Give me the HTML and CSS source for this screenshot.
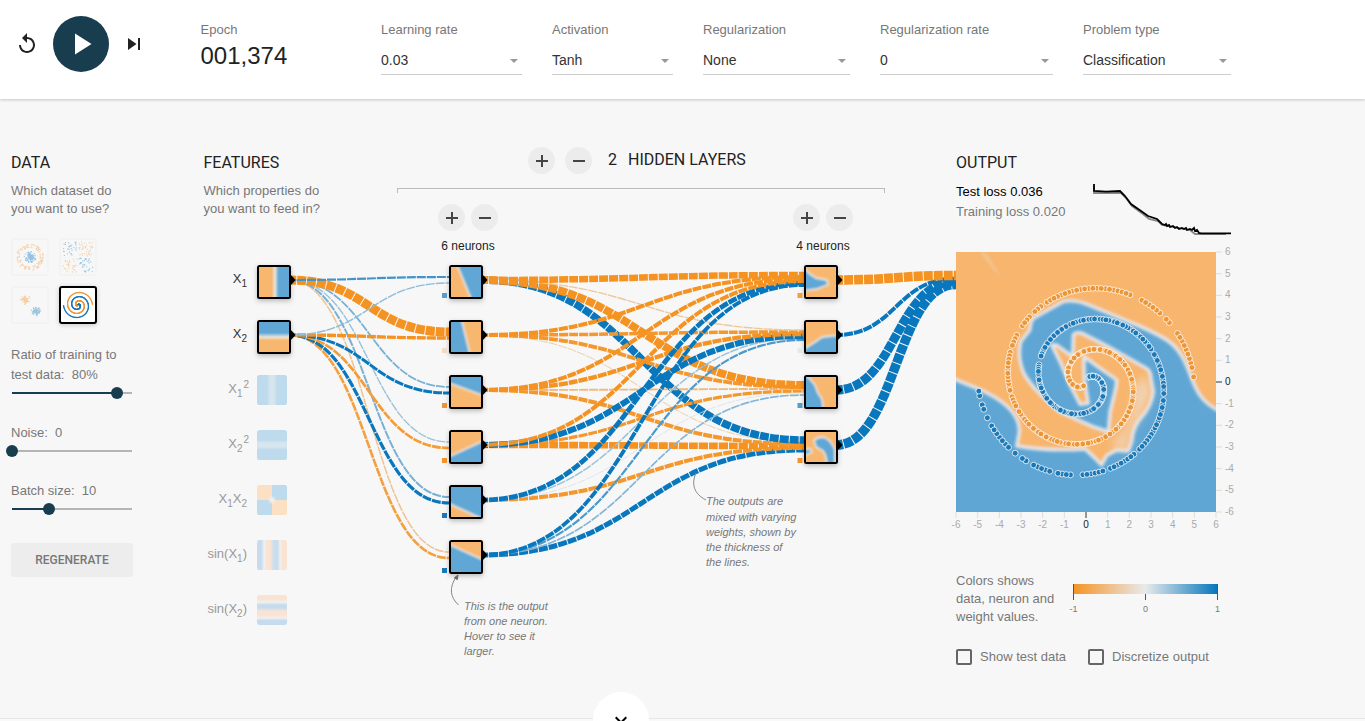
FILE: index.html
```html
<!DOCTYPE html>
<html lang="en">
<head>
<meta charset="utf-8">
<title>Neural Network Playground</title>
<link rel="stylesheet" href="styles.css">
</head>
<body>
<header class="top">
  <div class="transport">
    <svg class="reset" width="24" height="24" viewBox="0 0 24 24"><path d="M12 5V1L7 6l5 5V7c3.31 0 6 2.69 6 6s-2.69 6-6 6-6-2.69-6-6H4c0 4.42 3.58 8 8 8s8-3.58 8-8-3.58-8-8-8z"/></svg>
    <button class="play" aria-label="Run"><svg width="36" height="36" viewBox="0 0 24 24"><path d="M8 5v14l11-7z"/></svg></button>
    <svg class="step" width="24" height="24" viewBox="0 0 24 24"><path d="M6 18l8.5-6L6 6v12zM16 6v12h2V6h-2z"/></svg>
  </div>
  <div class="epoch"><span class="label">Epoch</span><span class="count">001,374</span></div>
  <div class="control lr"><span class="label">Learning rate</span><div class="select">0.03</div></div>
  <div class="control act"><span class="label">Activation</span><div class="select">Tanh</div></div>
  <div class="control reg"><span class="label">Regularization</span><div class="select">None</div></div>
  <div class="control rate"><span class="label">Regularization rate</span><div class="select">0</div></div>
  <div class="control prob"><span class="label">Problem type</span><div class="select">Classification</div></div>
</header>

<main class="main">
  <section class="data">
    <h4>Data</h4>
    <p class="hint">Which dataset do<br>you want to use?</p>
    <div class="thumbs">
      <svg class="thumb" id="circle" viewBox="0 0 32 32"></svg>
      <svg class="thumb" id="xor" viewBox="0 0 32 32"></svg>
      <svg class="thumb" id="gauss" viewBox="0 0 32 32"></svg>
      <svg class="thumb selected" id="spiral" viewBox="0 0 32 32"></svg>
    </div>
    <div class="slider ratio"><p>Ratio of training to<br>test data: &nbsp;80%</p><div class="track"><i class="fill"></i><i class="knob"></i></div></div>
    <div class="slider noise"><p>Noise: &nbsp;0</p><div class="track"><i class="fill"></i><i class="knob"></i></div></div>
    <div class="slider batch"><p>Batch size: &nbsp;10</p><div class="track"><i class="fill"></i><i class="knob"></i></div></div>
    <button class="regen">Regenerate</button>
  </section>

  <section class="network">
    <div class="heads">
      <div class="features">
        <h4>Features</h4>
        <p class="hint">Which properties do<br>you want to feed in?</p>
      </div>
      <div class="hidden">
        <div class="layers"><button class="round plus"></button><button class="round"></button><span class="num">2</span><span>Hidden layers</span></div>
        <div class="bracket"></div>
        <div class="sizes">
          <div class="size"><div class="pair"><button class="round plus"></button><button class="round"></button></div>6 neurons</div>
          <div class="size"><div class="pair"><button class="round plus"></button><button class="round"></button></div>4 neurons</div>
        </div>
      </div>
    </div>
    <svg id="net" class="net" width="752" height="468" viewBox="204 253 752 468">
      <defs>
        <filter id="soft" x="-30%" y="-30%" width="160%" height="160%"><feGaussianBlur stdDeviation="0.8"/></filter>
        <filter id="shade" x="-30%" y="-30%" width="160%" height="170%"><feDropShadow dx="0" dy="2" stdDeviation="2.5" flood-opacity=".25"/></filter>
        <clipPath id="tile"><rect width="30" height="30"/></clipPath>
        <linearGradient id="gx1"><stop offset=".42" stop-color="#f8b76f"/><stop offset=".53" stop-color="#e8e2d8"/><stop offset=".66" stop-color="#60a7d6"/></linearGradient>
        <linearGradient id="gx2" x2="0" y2="1"><stop offset=".36" stop-color="#60a7d6"/><stop offset=".5" stop-color="#e8e2d8"/><stop offset=".62" stop-color="#f8b76f"/></linearGradient>
        <linearGradient id="gsq1"><stop offset=".33" stop-color="#bedaed"/><stop offset=".44" stop-color="#d6e6ee"/><stop offset=".56" stop-color="#d6e6ee"/><stop offset=".67" stop-color="#bedaed"/></linearGradient>
        <linearGradient id="gsq2" x2="0" y2="1"><stop offset=".33" stop-color="#bedaed"/><stop offset=".44" stop-color="#d6e6ee"/><stop offset=".56" stop-color="#d6e6ee"/><stop offset=".67" stop-color="#bedaed"/></linearGradient>
        <linearGradient id="gs1"><stop offset=".14" stop-color="#c6dcee"/><stop offset=".24" stop-color="#f0f0f0"/><stop offset=".33" stop-color="#f9e4d3"/><stop offset=".45" stop-color="#f9e4d3"/><stop offset=".55" stop-color="#cbdfed"/><stop offset=".68" stop-color="#c6dcee"/><stop offset=".77" stop-color="#f0f0f0"/><stop offset=".85" stop-color="#f9e4d3"/></linearGradient>
        <linearGradient id="gs2" x2="0" y2="1"><stop offset=".14" stop-color="#f9e4d3"/><stop offset=".24" stop-color="#f0f0f0"/><stop offset=".33" stop-color="#c6dcee"/><stop offset=".43" stop-color="#c6dcee"/><stop offset=".54" stop-color="#f9e4d3"/><stop offset=".68" stop-color="#f9e4d3"/><stop offset=".77" stop-color="#f0f0f0"/><stop offset=".85" stop-color="#c6dcee"/></linearGradient>
      </defs>
      <g id="links" fill="none"></g>
      <g id="nodes"></g>
      <g class="feature-names">
        <text class="on" x="247" y="283">X<tspan class="sub" dy="4">1</tspan></text>
        <text class="on" x="247" y="338">X<tspan class="sub" dy="4">2</tspan></text>
        <text x="249" y="393">X<tspan class="sub" dy="4">1</tspan><tspan class="sub" dx="1" dy="-9">2</tspan></text>
        <text x="249" y="448">X<tspan class="sub" dy="4">2</tspan><tspan class="sub" dx="1" dy="-9">2</tspan></text>
        <text x="247" y="503">X<tspan class="sub" dy="4">1</tspan><tspan dy="-4">X</tspan><tspan class="sub" dy="4">2</tspan></text>
        <text x="247" y="558">sin(X<tspan class="sub" dy="4">1</tspan><tspan dy="-4">)</tspan></text>
        <text x="247" y="613">sin(X<tspan class="sub" dy="4">2</tspan><tspan dy="-4">)</tspan></text>
      </g>
      <g class="arrows">
        <path d="M458.5 605C450 597 449 588 456 577"/><path class="tip" d="M458 575l-.6 4.6-3-1.8z"/>
        <path d="M706 500C694 494 691 484 696 473"/>
      </g>
      <g class="note">
        <text x="464" y="610">This is the output</text><text x="464" y="625">from one neuron.</text><text x="464" y="640">Hover to see it</text><text x="464" y="655">larger.</text>
        <text x="706" y="505">The outputs are</text><text x="706" y="521">mixed with varying</text><text x="706" y="536">weights, shown by</text><text x="706" y="551">the thickness of</text><text x="706" y="566">the lines.</text>
      </g>
    </svg>
  </section>

  <section class="output">
    <h4>Output</h4>
    <div class="stats">
      <div class="losses"><div>Test loss 0.036</div><div class="train">Training loss 0.020</div></div>
      <svg class="chart" width="140" height="56" viewBox="0 0 140 56" fill="none">
        <path stroke="#888" d="M3 3v7h27l5 5 6 8 11 8 6 5 9 2 4 4 28 5 5 4h31"/>
        <path stroke="#000" d="M3 1v7l12 .6L29 8l5 5 6 8 10 7 7 5 9 3 5 5 3 1 1-1 1 2 2-1 1 2 3-1 2 2 2-1 2 2 3-1 2 1 2-1 1 2 3-1 2 1 2-2 1 3 2-1 2 3 2 .4h31"/>
      </svg>
    </div>
    <svg id="map" class="map" width="285" height="288" viewBox="0 0 285 288">
      <defs>
        <filter id="haze" filterUnits="userSpaceOnUse" x="-60" y="-60" width="940" height="940"><feGaussianBlur stdDeviation="5"/></filter>
        <filter id="fog" x="-50%" y="-50%" width="200%" height="200%"><feGaussianBlur stdDeviation="14"/></filter>
      </defs>
      <svg width="260" height="260" y="1" viewBox="18 21 780 780">
        <rect x="18" y="21" width="780" height="780" fill="#60a6d4"/>
        <g filter="url(#haze)">
          <path fill="#f7b56d" stroke="#e6e7e8" stroke-width="10" stroke-linejoin="round" d="M-30-30H850V520L798 493Q755 470 735 425Q722 395 712 368Q690 310 650 285Q600 255 540 232L410 178Q370 163 340 170L250 220Q240 235 240 255L212 290Q202 340 222 385Q250 435 330 500L430 545L475 560L480 500L497 430L500 405L450 370L402 335L403 400L415 475L390 478L360 420L330 350L305 300L320 300L368 335L370 270Q375 260 395 264L470 302L590 370Q603 380 603 400L610 440Q605 480 580 510Q548 540 545 590L535 618L500 615L470 632L455 660L435 640L405 612Q300 620 200 603L208 560Q208 520 175 488Q140 455 80 430L-30 385Z"/>
        </g>
        <path filter="url(#fog)" fill="#efdfd0" opacity=".7" d="M585 390L605 440L570 515L540 560L530 615L480 605L520 560L545 500L555 420Z"/>
        <path filter="url(#haze)" fill="#f0cda0" opacity=".6" d="M85 15L110 25L155 98L130 75Z"/>
        <g id="dots" stroke="#fff" stroke-width="2.6" stroke-opacity=".9"></g>
      </svg>
      <g id="axes"></g>
    </svg>
    <div class="legend">
      <p>Colors shows<br>data, neuron and<br>weight values.</p>
      <div class="scale"><div class="ramp"></div><div class="ticks"><span>-1</span><span class="mid">0</span><span>1</span></div></div>
    </div>
    <div class="checks"><label><i></i>Show test data</label><label><i></i>Discretize output</label></div>
  </section>
</main>
<div class="more"><svg width="24" height="24" viewBox="0 0 24 24"><path d="M16.59 8.59L12 13.17 7.41 8.59 6 10l6 6 6-6z"/></svg></div>
<script src="playground.js"></script>
</body>
</html>
```
FILE: styles.css
```css
* { box-sizing: border-box; }
body {
  margin: 0;
  position: relative;
  width: 1365px;
  height: 721px;
  overflow: hidden;
  background: #f7f7f7;
  color: #777;
  font: 13px/18px "Liberation Sans", Arial, sans-serif;
}
p, h4 { margin: 0; }
button { border: 0; padding: 0; }
.top {
  display: flex;
  height: 99px;
  background: #fff;
  box-shadow: 0 1px 3px rgba(0, 0, 0, .2);
}
.transport { display: flex; align-items: center; width: 200.5px; height: 88px; padding-left: 15px; }
.transport svg { fill: #222; }
.play {
  display: grid;
  place-items: center;
  width: 56px;
  height: 56px;
  margin: 0 13px 0 14px;
  border-radius: 50%;
  background: #183d4e;
}
.play svg { fill: #fff; }
.epoch { width: 180.5px; padding-top: 21px; }
.label { display: block; line-height: 18px; color: #777; }
.count { display: block; font-size: 24px; line-height: 34px; color: #222; }
.control { margin-right: 30px; padding-top: 21px; }
.select {
  position: relative;
  height: 28px;
  margin-top: 8px;
  border-bottom: 1px solid #ccc;
  font-size: 14px;
  line-height: 27px;
  color: #333;
}
.select::after {
  content: "";
  position: absolute;
  right: 4px;
  top: 12px;
  border: 4.5px solid transparent;
  border-top: 4.5px solid #999;
  border-bottom: 0;
}
.lr { width: 141px; }
.act { width: 121px; }
.reg { width: 147px; }
.rate { width: 173px; }
.prob { width: 148px; }

.main { display: grid; grid-template-columns: 192.5px 752.5px 300px; padding-left: 11px; }
h4, .layers { font: 16px/20px Roboto, sans-serif; color: #222; text-transform: uppercase; }
h4 { padding-top: 54px; height: 74px; }
.hint { margin-top: 9px; }
.thumbs { display: grid; grid-template-columns: 38px 38px; gap: 10px; margin-top: 20px; }
.thumb { width: 38px; height: 38px; padding: 1px; border: 2px solid #eee; border-radius: 3px; opacity: .4; }
.selected { border-color: #000; background: #fff; opacity: 1; box-shadow: 0 1px 5px rgba(0, 0, 0, .2); }
.ratio { margin-top: 21px; line-height: 20px; }
.track { position: relative; width: 120px; height: 2px; margin-left: 1px; background: #b5b5b5; }
.fill, .knob { position: absolute; background: #183d4e; }
.fill { left: 0; top: 0; height: 2px; }
.knob { width: 12px; height: 12px; top: -5px; margin-left: -6px; border-radius: 50%; }
.ratio .track { margin-top: 7px; }
.ratio .fill { width: 105px; }
.ratio .knob { left: 105px; }
.noise { margin-top: 30px; }
.noise .track, .batch .track { margin-top: 8px; }
.noise .knob { left: 0; }
.batch { margin-top: 30px; }
.batch .fill { width: 37px; }
.batch .knob { left: 37px; }
.regen {
  width: 122px;
  height: 34px;
  margin-top: 33px;
  border-radius: 2px;
  background: #ededed;
  color: #777;
  font: 500 12px Roboto, sans-serif;
  text-transform: uppercase;
}

.heads { display: flex; height: 154px; }
.features { width: 193.5px; }
.hidden { width: 488px; padding-top: 48px; }
.layers { display: flex; align-items: center; height: 27px; padding-left: 131px; line-height: 27px; }
.layers .round { margin-right: 10px; }
.layers span { position: relative; top: -1px; }
.layers .num { margin: 0 11px 0 6px; }
.round { position: relative; width: 27px; height: 27px; border-radius: 50%; background: #ececec; }
.round::before, .plus::after { content: ""; position: absolute; left: 8px; top: 13px; width: 12px; height: 2px; background: #444; }
.plus::after { transform: rotate(90deg); }
.bracket { height: 5px; margin-top: 14px; border: 1px solid #bbb; border-bottom: 0; }
.sizes { display: flex; justify-content: space-between; padding: 11px 32px 0 41px; }
.size { width: 60px; text-align: center; color: #222; font-size: 12px; line-height: 30px; }
.pair { display: flex; justify-content: space-between; }
.net { display: block; margin-left: .5px; }
.feature-names text { font-size: 13px; text-anchor: end; fill: #999; }
.feature-names .on { fill: #333; }
.feature-names .sub { font-size: 10px; }
.note text { font-size: 11px; font-style: italic; fill: #777; }
.arrows path { fill: none; stroke: #888; }
.arrows .tip { fill: #666; stroke: #666; }

.stats { display: flex; justify-content: space-between; width: 277px; height: 78px; line-height: 20px; color: #000; }
.losses { padding-top: 9px; }
.losses .train { color: #777; }
.chart { margin: 10px 2px 0 0; stroke-width: 1.8; }
.map { display: block; overflow: visible; }
#axes text { font-size: 10px; fill: #aaa; }
#axes .zero { fill: #222; }
.legend { display: flex; height: 54px; margin-top: 33px; }
.legend p { width: 113px; }
.scale { width: 152px; padding-top: 12px; }
.ramp { width: 144px; height: 10px; margin-left: 4px; background: linear-gradient(90deg, #f59322, #e8eaeb, #0877bd); }
.ticks { display: flex; justify-content: space-between; width: 153px; font-size: 9px; line-height: 10px; }
.ticks span { width: 9px; text-align: center; }
.ticks span::before { content: ""; display: block; width: 1px; height: 16px; margin: -10px auto 4px; background: #555; }
.ticks .mid::before { height: 6px; margin-top: 0; }
.checks { display: flex; gap: 22px; margin-top: 22px; }
.checks label { display: flex; align-items: center; }
.checks i { width: 16px; height: 16px; margin-right: 8px; border: 2px solid #666; border-radius: 2px; }
.more {
  position: absolute;
  left: 0;
  right: 0;
  top: 718px;
  height: 10px;
  border-top: 1px solid #e6e6e6;
  background: #f9f9f9;
}
.more svg { position: absolute; left: 593px; top: -27px; width: 56px; height: 56px; padding: 16px; border-radius: 50%; background: #fff; }
```
FILE: playground.js
```javascript
const NS = "http://www.w3.org/2000/svg";
const ORANGE = "#f8b76f", BLUE = "#60a7d6";
let seed = 7;
function rand() {
  seed = (seed * 16807) % 2147483647;
  return seed / 2147483647;
}
function add(parent, name, attrs, text) {
  const el = document.createElementNS(NS, name);
  for (const k in attrs) el.setAttribute(k, attrs[k]);
  if (text !== undefined) el.textContent = text;
  parent.appendChild(el);
  return el;
}
const rowY = i => 280 + 55 * i;
const links = document.getElementById("links");
const nodes = document.getElementById("nodes");

function mix(s) {
  const end = s < 0 ? [245, 147, 34] : [8, 119, 189];
  const t = Math.min(1, Math.abs(s));
  return "rgb(" + [232, 234, 235].map((c, i) => Math.round(c + (end[i] - c) * t)) + ")";
}

// Each row lists the [width, signed strength] of the links entering one node.
const toFirst = [
  [[2.2, .75], [1.4, .4]],
  [[9, -1], [3.4, -1]],
  [[1.8, .5], [3, 1]],
  [[1.4, .35], [2.7, -.9]],
  [[2, .5], [3.2, 1]],
  [[1.5, -.45], [2.6, -.85]]
];
const toSecond = [
  [[6.5, -1], [4, -1], [4, -1], [4, -1], [4.8, 1], [3.8, 1]],
  [[1.4, -.4], [3.5, -.95], [4.3, -1], [6, 1], [1.5, .35], [2.2, .7]],
  [[8, -1], [3.8, -.95], [1.9, -.55], [3.2, -.95], [.8, .08], [1.7, .45]],
  [[7.5, 1], [1.1, -.25], [4, -.95], [6.6, -1], [4, -.95], [5, 1]]
];
const toOutput = [[[9.5, -1], [4, 1], [9, 1], [9.5, 1]]];

// Later links go beneath earlier ones.
function connect(x0, x1, table) {
  table.forEach((row, j) => row.forEach(([w, s], i) => {
    const y0 = rowY(i), y1 = rowY(j) + (i - (row.length - 1) / 2) / row.length * 12;
    const m = (x0 + x1) / 2;
    const link = add(links, "path", {
      d: `M${x0} ${y0}C${m} ${y0} ${m} ${y1} ${x1} ${y1}`,
      stroke: mix(s), "stroke-width": w, "stroke-dasharray": "9 1", "stroke-dashoffset": 2
    });
    links.prepend(link);
  }));
}
connect(289, 449, toFirst);
connect(481, 804, toSecond);
connect(836, 956, toOutput);

function node(left, row, bg, shape, color) {
  const g = add(nodes, "g", { transform: `translate(${left + 2} ${rowY(row) - 13})` });
  add(g, "rect", { x: -2, y: -2, width: 34, height: 34, rx: 2.5, filter: "url(#shade)" });
  const inner = add(g, "g", { "clip-path": "url(#tile)" });
  add(inner, "rect", { width: 30, height: 30, fill: bg });
  if (shape) add(inner, "path", {
    d: shape, fill: color, stroke: "#e9e5df", "stroke-width": 1.8, "stroke-linejoin": "round", filter: "url(#soft)"
  });
  add(g, "path", { d: "M31.5 8.5h1l4 4.5-4 4.5h-1z" });
}
node(257, 0, "url(#gx1)");
node(257, 1, "url(#gx2)");
const first = [
  ["M-5-5H5L22 36H-5Z", ORANGE, BLUE],
  ["M-5-5H10L20 36H-5Z", BLUE, ORANGE],
  ["M-5-9H36V20L-5 5Z", BLUE, ORANGE],
  ["M-5 26L36 7V36H-5Z", BLUE, ORANGE],
  ["M-5 15L36 34V40H-5Z", ORANGE, BLUE],
  ["M-5-9H36V20L-5 1Z", ORANGE, BLUE]
];
first.forEach(([d, c, bg], i) => node(449, i, bg, d, c));
const second = [
  "M-4-1L4 7L10 11L16 12L21 13L22 18L16 20L12 22L-4 24Z",
  "M-4 28L9 20L16 15L24 14L36 13V36H-4Z",
  "M-4-5L4 2L9 8L12 16L16 22L18 36H-4Z",
  "M8 9Q10 5 18 5Q26 9 29 18V36H21Q21 24 17 19L10 15ZM-4 17L5 17L6 20L-4 25Z"
];
second.forEach((d, i) => node(804, i, ORANGE, d, BLUE));

["#5a9ac8", "#eedccb", "#f0922f", "#f0922f", "#1a78b8", "#1a78b8"].forEach((c, i) =>
  add(nodes, "rect", { x: 442, y: rowY(i) + 13, width: 5, height: 5, fill: c }));
["#f0a040", "#e5e8ea", "#5a9ac8", "#f0922f"].forEach((c, i) =>
  add(nodes, "rect", { x: 797.5, y: rowY(i) + 13, width: 5, height: 5, fill: c }));

["gsq1", "gsq2", null, "gs1", "gs2"].forEach((id, i) => {
  const y = rowY(i + 2) - 15;
  if (id) {
    add(nodes, "rect", { x: 257, y, width: 30, height: 30, rx: 2.5, fill: `url(#${id})` });
    return;
  }
  add(nodes, "rect", { x: 257, y, width: 30, height: 30, rx: 2.5, fill: "#fbe0c4" });
  add(nodes, "path", { d: `M272 ${y}h12.5q2.5 0 2.5 2.5V${y + 15}h-15zM257 ${y + 15}h15v15h-12.5q-2.5 0-2.5-2.5z`, fill: "#bedaed" });
  add(nodes, "circle", { cx: 272, cy: y + 15, r: 3, fill: "#f0f0f0", filter: "url(#soft)" });
});

const held = {
  blue: [249, 246, 243, 241, 233, 231, 228, 222, 217, 216, 209],
  orange: [226, 227, 234, 237, 238, 248, 193, 194]
};
const points = [];
for (let i = 11; i < 250; i++) for (const side of ["blue", "orange"]) {
  const skip = i < 206 && rand() < .09;
  if (skip || held[side].includes(i)) continue;
  const a = (250 - i) * 2.52 * Math.PI / 180 + (side === "blue" ? Math.PI : 0);
  const r = i / 250 * 5 * 65;
  points.push([407.5 + r * Math.cos(a), 410 - r * Math.sin(a), side]);
}
for (let i = points.length - 1; i > 0; i--) {
  const j = Math.floor(rand() * (i + 1));
  [points[i], points[j]] = [points[j], points[i]];
}
const dots = document.getElementById("dots");
points.forEach(([cx, cy, side]) => add(dots, "circle", { cx, cy, r: 8.8, fill: side === "blue" ? "#1a78b8" : "#ee9535" }));

const axes = document.getElementById("axes");
for (let v = -6; v <= 6; v++) {
  const p = (v + 6) * 260 / 12;
  const color = v ? "#ddd" : "#333", cls = v ? "" : "zero";
  add(axes, "path", { d: `M${p} 261v6M260 ${261 - p}h6`, stroke: color });
  add(axes, "text", { x: p, y: 277, "text-anchor": "middle", class: cls }, v);
  add(axes, "text", { x: 269, y: 264 - p, class: cls }, v);
}

function speck(id, x, y, c) {
  add(document.getElementById(id), "circle", { cx: x, cy: y, r: .65, fill: c });
}
for (let i = 0; i < 130; i++) {
  const a = rand() * 7, r = rand() * 6, q = 9.5 + rand() * 4;
  speck("circle", 16 + r * Math.cos(a), 16 + r * Math.sin(a), "#0877bd");
  speck("circle", 16 + q * Math.cos(a * 3), 16 + q * Math.sin(a * 3), "#f59322");
  const x = rand() * 28 - 14, y = rand() * 28 - 14;
  speck("xor", 16 + x + Math.sign(x), 16 + y + Math.sign(y), x * y > 0 ? "#0877bd" : "#f59322");
  const g = () => (rand() + rand() + rand() - 1.5) * 3.6;
  if (i < 70) {
    speck("gauss", 11 + g(), 11 + g(), "#f59322");
    speck("gauss", 22 + g(), 22 + g(), "#0877bd");
  }
}
for (let i = 0; i < 250; i++) {
  const a = (250 - i) * 2.52 * Math.PI / 180, r = i / 250 * 14.5;
  speck("spiral", 16 + r * Math.cos(a), 16 - r * Math.sin(a), "#ee9535");
  speck("spiral", 16 - r * Math.cos(a), 16 + r * Math.sin(a), "#1a78b8");
}
```
